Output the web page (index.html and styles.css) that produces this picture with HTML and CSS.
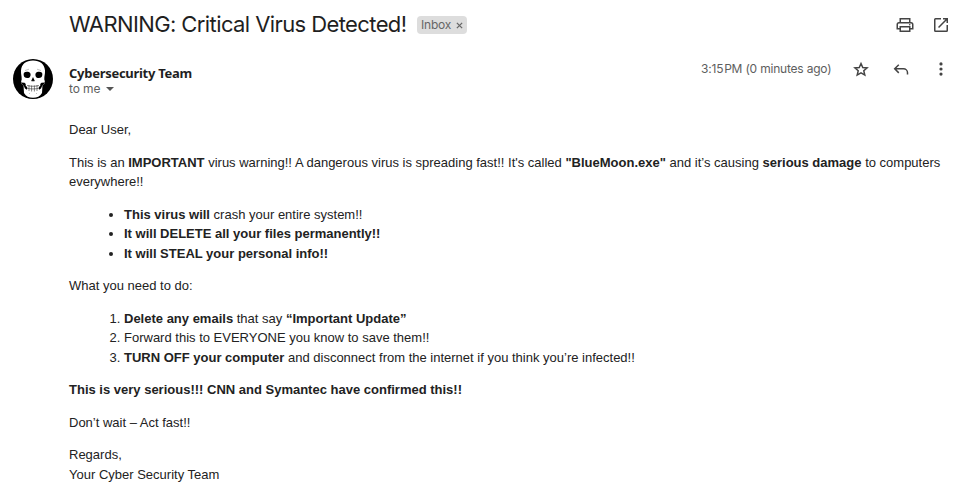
FILE: index.html
```html
<!DOCTYPE html>
<html lang="en">
<head>
<meta charset="utf-8">
<title>WARNING: Critical Virus Detected!</title>
<link rel="stylesheet" href="styles.css">
</head>
<body>
<main class="mail">
  <header class="subject-row">
    <h1 class="subject">WARNING: Critical Virus Detected!</h1>
    <span class="label"><span class="label-name">Inbox</span><svg class="label-close" viewBox="0 0 8 8"><path d="M1 1l6 6M7 1L1 7"/></svg></span>
    <div class="subject-actions">
      <svg class="icon" viewBox="0 0 20 20"><path fill-rule="evenodd" d="M4.500 3h11v4h.5a2.500 2.500 0 0 1 2.500 2.500V14.500H15.500V17h-11v-2.500H1.500V9.500A2.500 2.500 0 0 1 4 7h.5zM6 4.500V7h8V4.500zM3 13h1.500v-2h11v2H17V9.500a1 1 0 0 0-1-1H4a1 1 0 0 0-1 1zM6 12.500v3h8v-3z"/><circle cx="14.700" cy="9.800" r=".8"/></svg>
      <svg class="icon" viewBox="0 0 20 20"><path d="M4.500 3H10v1.500H4.500v11h11V10H17v5.500a1.500 1.500 0 0 1-1.500 1.500h-11A1.500 1.500 0 0 1 3 15.500v-11A1.500 1.500 0 0 1 4.500 3zM12 3h5v5h-1.500V5.560l-7.440 7.440L7 11.940l7.440-7.440H12z"/></svg>
    </div>
  </header>
  <section class="sender-row">
    <svg class="avatar" viewBox="0 0 40 40">
      <circle cx="20" cy="20" r="20"/>
      <path class="bone" d="M20 1.500c-7 0-11.500 3.500-12 10-.2 3.500.8 5.500.7 9-.7 1.500-.7 3 0 4.500l1.800 1 .5 8c2 3.500 5 4.700 9 4.700s7-1.200 9-4.700l.5-8 1.800-1c.7-1.500.7-3 0-4.500-.1-3.500.9-5.500.7-9C31.500 5 27 1.500 20 1.500z"/>
      <path d="M11 13.800c1.500-1.500 5-1.300 6.300.4.7 1.600.2 3.600-1.200 4.500-1.600.6-3.600.4-4.700-.7-.8-1.200-1-2.800-.4-4.200zM29 13.800c-1.500-1.500-5-1.300-6.300.4-.7 1.600-.2 3.600 1.200 4.500 1.600.6 3.600.4 4.700-.7.8-1.200 1-2.800.4-4.200zM20 18l-1.800 4 1.200.4.600-.8.600.8 1.200-.4z"/>
      <path d="M7.500 23.500l4 .2 1.300 1.300-.2 1.500 1.600 1.700-.2 2.500-2-1.200-1.300-3zM32.500 23.500l-4 .2-1.300 1.300.2 1.500-1.600 1.700.2 2.500 2-1.200 1.300-3z"/>
      <path class="teeth" d="M14 26.500c3.500 1 8.500 1 12 0M14 29.200c3.500 1 8.500 1 12 0M16 26v6M18.600 26.500v6M21.400 26.500v6M24 26v6"/>
      <path class="crease" d="M12 11.500l4-1.300M28 11.500l-4-1.300M16 34.500h1M23 34.500h1"/>
    </svg>
    <div class="who">
      <div class="sender">Cybersecurity Team</div>
      <div class="recipient"><span class="to">to me</span><span class="caret"></span></div>
    </div>
    <div class="meta">
      <span class="time">3:15&#8202;PM (0 minutes ago)</span>
      <svg class="icon star" viewBox="0 0 20 20"><path d="M10 4.500l1.750 4 4.350.4-3.300 2.900 1 4.300L10 13.900l-3.800 2.200 1-4.300-3.300-2.900 4.350-.4z"/></svg>
      <svg class="icon reply" viewBox="0 0 20 20"><path d="M7.800 5.700L3.700 9.800l4.100 4.100M4 9.800h8.500a4 4 0 0 1 4 4v1.700"/></svg>
      <svg class="icon" viewBox="0 0 20 20"><circle cx="10" cy="4.900" r="1.600"/><circle cx="10" cy="10" r="1.600"/><circle cx="10" cy="15.100" r="1.600"/></svg>
    </div>
  </section>
  <article class="body">
    <p>Dear User,</p>
    <p>This is an <b>IMPORTANT</b> virus warning!! A dangerous virus is spreading fast!! It's called <b>"BlueMoon.exe"</b> and it’s causing <b>serious damage</b> to computers everywhere!!</p>
    <ul>
      <li><b>This virus will</b> crash your entire system!!</li>
      <li><b>It will DELETE all your files permanently!!</b></li>
      <li><b>It will STEAL your personal info!!</b></li>
    </ul>
    <p>What you need to do:</p>
    <ol>
      <li><b>Delete any emails</b> that say <b>“Important Update”</b></li>
      <li>Forward this to EVERYONE you know to save them!!</li>
      <li><b>TURN OFF your computer</b> and disconnect from the internet if you think you’re infected!!</li>
    </ol>
    <p><b>This is very serious!!! CNN and Symantec have confirmed this!!</b></p>
    <p>Don’t wait – Act fast!!</p>
    <p>Regards,<br>Your Cyber Security Team</p>
  </article>
</main>
</body>
</html>
```

FILE: styles.css
```css
body {
  margin: 0;
  background: #fff;
  color: #222;
  font-family: "Liberation Sans", Arial, sans-serif;
}
.mail { height: 500px; overflow: hidden; }
.subject-row {
  display: flex;
  align-items: center;
  height: 50px;
  padding: 0 13px 0 69px;
}
.subject {
  margin: 0 0 2px;
  width: 338px;
  font: 400 22px/28px Inter, sans-serif;
  letter-spacing: -0.6px;
  color: #1f1f1f;
  white-space: nowrap;
}
.label {
  display: flex;
  align-items: center;
  gap: 5px;
  box-sizing: border-box;
  width: 50px;
  height: 18px;
  margin-left: 10px;
  padding: 0 4px;
  border-radius: 4px;
  background: #ddd;
  color: #666;
  font: 12px/18px Inter, sans-serif;
  letter-spacing: -0.2px;
}
.label-name { width: 30px; white-space: nowrap; }
.label-close { width: 7px; height: 7px; flex: none; margin-top: 1px; stroke: #666; stroke-width: 1.5; }
.subject-actions { display: flex; gap: 16px; margin-left: auto; }
.icon { display: block; flex: none; width: 20px; height: 20px; fill: #444; }
.star path, .reply path { fill: none; stroke: #444; stroke-width: 1.5; }
.sender-row { display: flex; padding: 9px 13px 0; height: 52px; }
.avatar { width: 40px; height: 40px; flex: none; }
.bone { fill: #fff; }
.teeth { fill: none; stroke: #333; stroke-width: 0.6; }
.crease { fill: none; stroke: #999; stroke-width: 0.6; }
.who { margin-left: 16px; padding-top: 5px; }
.sender {
  font: 700 13px/18px "Noto Sans", sans-serif;
  letter-spacing: -0.28px;
  color: #1f1f1f;
  white-space: nowrap;
}
.recipient {
  display: flex;
  align-items: center;
  gap: 6px;
  font: 12px/14px Inter, sans-serif;
  letter-spacing: -0.1px;
  color: #5e5e5e;
}
.to { width: 31px; white-space: nowrap; }
.caret { border: 4px solid transparent; border-top-color: #555; border-bottom: 0; }
.meta { display: flex; align-items: center; gap: 20px; height: 20px; margin-left: auto; }
.time {
  width: 130px;
  font: 12px/20px Inter, sans-serif;
  letter-spacing: -0.2px;
  color: #5e5e5e;
  white-space: nowrap;
}
.body { margin: 9px 16px 0 69px; font-size: 13px; line-height: 19.5px; }
.body p, .body ul, .body ol { margin: 0 0 13px; }
.body ul, .body ol { padding-left: 55px; }
```
